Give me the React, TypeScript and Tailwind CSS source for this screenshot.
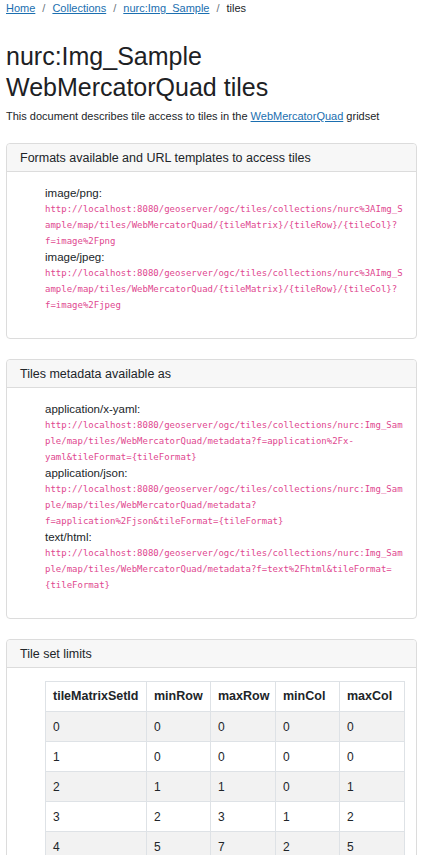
const sans = "font-['Liberation_Sans',Arial,sans-serif]";
const mono = "font-['DejaVu_Sans_Mono','Liberation_Mono',monospace]";

interface Entry {
  label: string;
  lines: string[];
}

const formats: Entry[] = [
  {
    label: "image/png:",
    lines: [
      "http://localhost:8080/geoserver/ogc/tiles/collections/nurc%3AImg_S",
      "ample/map/tiles/WebMercatorQuad/{tileMatrix}/{tileRow}/{tileCol}?",
      "f=image%2Fpng",
    ],
  },
  {
    label: "image/jpeg:",
    lines: [
      "http://localhost:8080/geoserver/ogc/tiles/collections/nurc%3AImg_S",
      "ample/map/tiles/WebMercatorQuad/{tileMatrix}/{tileRow}/{tileCol}?",
      "f=image%2Fjpeg",
    ],
  },
];

const metadata: Entry[] = [
  {
    label: "application/x-yaml:",
    lines: [
      "http://localhost:8080/geoserver/ogc/tiles/collections/nurc:Img_Sam",
      "ple/map/tiles/WebMercatorQuad/metadata?f=application%2Fx-",
      "yaml&tileFormat={tileFormat}",
    ],
  },
  {
    label: "application/json:",
    lines: [
      "http://localhost:8080/geoserver/ogc/tiles/collections/nurc:Img_Sam",
      "ple/map/tiles/WebMercatorQuad/metadata?",
      "f=application%2Fjson&tileFormat={tileFormat}",
    ],
  },
  {
    label: "text/html:",
    lines: [
      "http://localhost:8080/geoserver/ogc/tiles/collections/nurc:Img_Sam",
      "ple/map/tiles/WebMercatorQuad/metadata?f=text%2Fhtml&tileFormat=",
      "{tileFormat}",
    ],
  },
];

const limits = [
  ["0", "0", "0", "0", "0"],
  ["1", "0", "0", "0", "0"],
  ["2", "1", "1", "0", "1"],
  ["3", "2", "3", "1", "2"],
  ["4", "5", "7", "2", "5"],
];

function Card({ title, children }: { title: string; children: React.ReactNode }) {
  return (
    <div className="mb-[20px] rounded-[4px] border border-[#dcdcdc] bg-white">
      <div className="h-[28px] rounded-t-[4px] border-b border-[#dcdcdc] bg-[#f7f7f7] px-[13px] text-[12.5px] leading-[28px] text-[#212529]">
        {title}
      </div>
      <div className="pt-[13px] pr-[12px] pb-[25px] pl-[38px]">{children}</div>
    </div>
  );
}

function EntryList({ entries }: { entries: Entry[] }) {
  return (
    <div>
      {entries.map((e) => (
        <div key={e.label}>
          <div className="text-[11.5px] leading-[16px] text-[#212529]">{e.label}</div>
          {e.lines.map((l, i) => (
            <div
              key={i}
              className={`${mono} whitespace-nowrap text-[9px] leading-[16px] text-[#e0478f]`}
            >
              {l}
            </div>
          ))}
        </div>
      ))}
    </div>
  );
}

function Crumb({ children }: { children: React.ReactNode }) {
  return <a className="cursor-pointer text-[#1b6fb0] underline">{children}</a>;
}

export default function App() {
  const cols = ["tileMatrixSetId", "minRow", "maxRow", "minCol", "maxCol"];
  const widths = ["w-[101px]", "w-[64px]", "w-[65px]", "w-[64px]", "w-[65px]"];
  return (
    <div className={`${sans} min-h-screen bg-white px-[6px] text-[#212529]`}>
      <nav className="flex h-[16px] items-center text-[11px] leading-[16px]">
        <Crumb>Home</Crumb>
        <span className="px-[7px] text-[#6c757d]">/</span>
        <Crumb>Collections</Crumb>
        <span className="px-[7px] text-[#6c757d]">/</span>
        <Crumb>nurc:Img_Sample</Crumb>
        <span className="px-[7px] text-[#6c757d]">/</span>
        <span>tiles</span>
      </nav>

      <h1 className="mt-[25px] text-[25px] leading-[31px] font-normal text-[#1d2124]">
        nurc:Img_Sample
        <br />
        WebMercatorQuad tiles
      </h1>
      <p className="mt-[5px] mb-[19px] text-[11px] leading-[16px]">
        This document describes tile access to tiles in the{" "}
        <a className="cursor-pointer text-[#1b6fb0] underline">WebMercatorQuad</a> gridset
      </p>

      <Card title="Formats available and URL templates to access tiles">
        <EntryList entries={formats} />
      </Card>

      <Card title="Tiles metadata available as">
        <EntryList entries={metadata} />
      </Card>

      <Card title="Tile set limits">
        <table className="w-[359px] table-fixed border-collapse text-[12px]">
          <thead>
            <tr>
              {cols.map((c, i) => (
                <th
                  key={c}
                  className={`${widths[i]} h-[30px] border border-[#dee2e6] px-[7px] text-left text-[12.5px] font-bold text-[#212529]`}
                >
                  {c}
                </th>
              ))}
            </tr>
          </thead>
          <tbody>
            {limits.map((row, r) => (
              <tr key={r} className={r % 2 === 0 ? "bg-[#f2f2f2]" : "bg-white"}>
                {row.map((v, i) => (
                  <td key={i} className="h-[30px] border border-[#dee2e6] px-[7px]">
                    {v}
                  </td>
                ))}
              </tr>
            ))}
          </tbody>
        </table>
      </Card>
    </div>
  );
}
